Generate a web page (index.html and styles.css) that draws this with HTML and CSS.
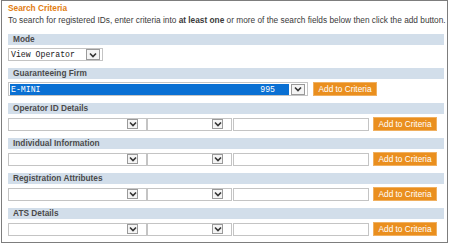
FILE: index.html
```html
<!DOCTYPE html>
<html lang="en">
<head>
    <meta charset="UTF-8">
    <title>Search Criteria</title>
    <link rel="stylesheet" href="styles.css">
</head>
<body>
    <div class="panel">
        <div class="title">Search Criteria</div>
        <p class="intro">To search for registered IDs, enter criteria into <b>at least one</b> or more of the search fields below then click the add button.</p>

        <div class="bar">Mode</div>
        <div class="row short">
            <div class="select mode">
                <span class="value">View Operator</span>
                <span class="arrow big"><svg width="8" height="6" viewBox="0 0 8 6"><path d="M1 1.5 L4 4.5 L7 1.5" fill="none" stroke="#333" stroke-width="1.6"/></svg></span>
            </div>
        </div>

        <div class="bar">Guaranteeing Firm</div>
        <div class="row">
            <div class="select firm">
                <span class="value picked"><span>E-MINI</span><span class="code">995</span></span>
                <span class="arrow big"><svg width="8" height="6" viewBox="0 0 8 6"><path d="M1 1.5 L4 4.5 L7 1.5" fill="none" stroke="#333" stroke-width="1.6"/></svg></span>
            </div>
            <button class="add first">Add to Criteria</button>
        </div>

        <div class="bar">Operator ID Details</div>
        <div class="row">
            <div class="select wide"><span class="value"></span><span class="arrow"><svg width="8" height="6" viewBox="0 0 8 6"><path d="M1 1.5 L4 4.5 L7 1.5" fill="none" stroke="#333" stroke-width="1.6"/></svg></span></div>
            <div class="select narrow"><span class="value"></span><span class="arrow"><svg width="8" height="6" viewBox="0 0 8 6"><path d="M1 1.5 L4 4.5 L7 1.5" fill="none" stroke="#333" stroke-width="1.6"/></svg></span></div>
            <input type="text" class="field">
            <button class="add">Add to Criteria</button>
        </div>

        <div class="bar">Individual Information</div>
        <div class="row">
            <div class="select wide"><span class="value"></span><span class="arrow"><svg width="8" height="6" viewBox="0 0 8 6"><path d="M1 1.5 L4 4.5 L7 1.5" fill="none" stroke="#333" stroke-width="1.6"/></svg></span></div>
            <div class="select narrow"><span class="value"></span><span class="arrow"><svg width="8" height="6" viewBox="0 0 8 6"><path d="M1 1.5 L4 4.5 L7 1.5" fill="none" stroke="#333" stroke-width="1.6"/></svg></span></div>
            <input type="text" class="field">
            <button class="add">Add to Criteria</button>
        </div>

        <div class="bar">Registration Attributes</div>
        <div class="row">
            <div class="select wide"><span class="value"></span><span class="arrow"><svg width="8" height="6" viewBox="0 0 8 6"><path d="M1 1.5 L4 4.5 L7 1.5" fill="none" stroke="#333" stroke-width="1.6"/></svg></span></div>
            <div class="select narrow"><span class="value"></span><span class="arrow"><svg width="8" height="6" viewBox="0 0 8 6"><path d="M1 1.5 L4 4.5 L7 1.5" fill="none" stroke="#333" stroke-width="1.6"/></svg></span></div>
            <input type="text" class="field">
            <button class="add">Add to Criteria</button>
        </div>

        <div class="bar">ATS Details</div>
        <div class="row">
            <div class="select wide"><span class="value"></span><span class="arrow"><svg width="8" height="6" viewBox="0 0 8 6"><path d="M1 1.5 L4 4.5 L7 1.5" fill="none" stroke="#333" stroke-width="1.6"/></svg></span></div>
            <div class="select narrow"><span class="value"></span><span class="arrow"><svg width="8" height="6" viewBox="0 0 8 6"><path d="M1 1.5 L4 4.5 L7 1.5" fill="none" stroke="#333" stroke-width="1.6"/></svg></span></div>
            <input type="text" class="field">
            <button class="add">Add to Criteria</button>
        </div>
    </div>
</body>
</html>
```

FILE: styles.css
```css
body {
    margin: 0;
    padding: 0;
    background-color: white;
    font-family: "Liberation Sans", Arial, sans-serif;
    font-size: 8.3px;
    color: #3a3a3a;
}
.panel {
    box-sizing: border-box;
    width: 447px;
    height: 243px;
    margin-left: 1px;
    padding: 1px 3px 0 6px;
    border: 1px solid #7d7d7d;
}
.title {
    font-weight: bold;
    color: #e27d12;
    line-height: 12px;
}
.intro {
    margin: 0 0 8px 0;
    line-height: 12px;
    white-space: nowrap;
}
.bar {
    height: 11px;
    line-height: 11px;
    padding-left: 5px;
    margin-bottom: 3px;
    background-color: #d2deea;
    font-weight: bold;
    color: #4a4a4a;
}
.row {
    display: flex;
    align-items: center;
    height: 14px;
    margin-bottom: 7px;
}
.row.short {
    height: 13px;
}
.select {
    box-sizing: border-box;
    display: flex;
    align-items: center;
    height: 13px;
    border: 1px solid #c4c4c4;
    background-color: white;
    padding: 0 1px;
}
.select .value {
    flex: 1;
    height: 9px;
    line-height: 9px;
    font-family: "Liberation Mono", "Courier New", monospace;
    font-size: 8.2px;
    color: #222;
    padding-left: 1px;
    white-space: pre;
}
.value.picked {
    display: flex;
    justify-content: space-between;
    height: 11px;
    line-height: 11px;
    background-color: #0a70d3;
    color: white;
    padding-right: 14px;
}
.arrow {
    box-sizing: border-box;
    display: flex;
    align-items: center;
    justify-content: center;
    width: 11px;
    height: 10px;
    border: 1px solid #9a9a9a;
    background-color: #f4f4f4;
    margin-right: 7px;
}
.arrow.big {
    width: 14px;
    height: 11px;
    margin-right: 1px;
    margin-left: 2px;
}
.mode {
    width: 95px;
}
.firm {
    width: 300px;
    height: 14px;
}
.wide {
    width: 139px;
}
.narrow {
    width: 85px;
    margin-left: 0;
}
.field {
    box-sizing: border-box;
    width: 136px;
    height: 13px;
    margin: 0 0 0 1px;
    padding: 0;
    border: 1px solid #c4c4c4;
}
.add {
    box-sizing: border-box;
    width: 64px;
    height: 14px;
    margin-left: 4px;
    padding: 0;
    border: 1px solid #f0b060;
    background-color: #ea8f1e;
    color: white;
    font-family: "Liberation Sans", Arial, sans-serif;
    font-size: 8.3px;
    cursor: pointer;
}
.add.first {
    margin-left: 5px;
}
```
